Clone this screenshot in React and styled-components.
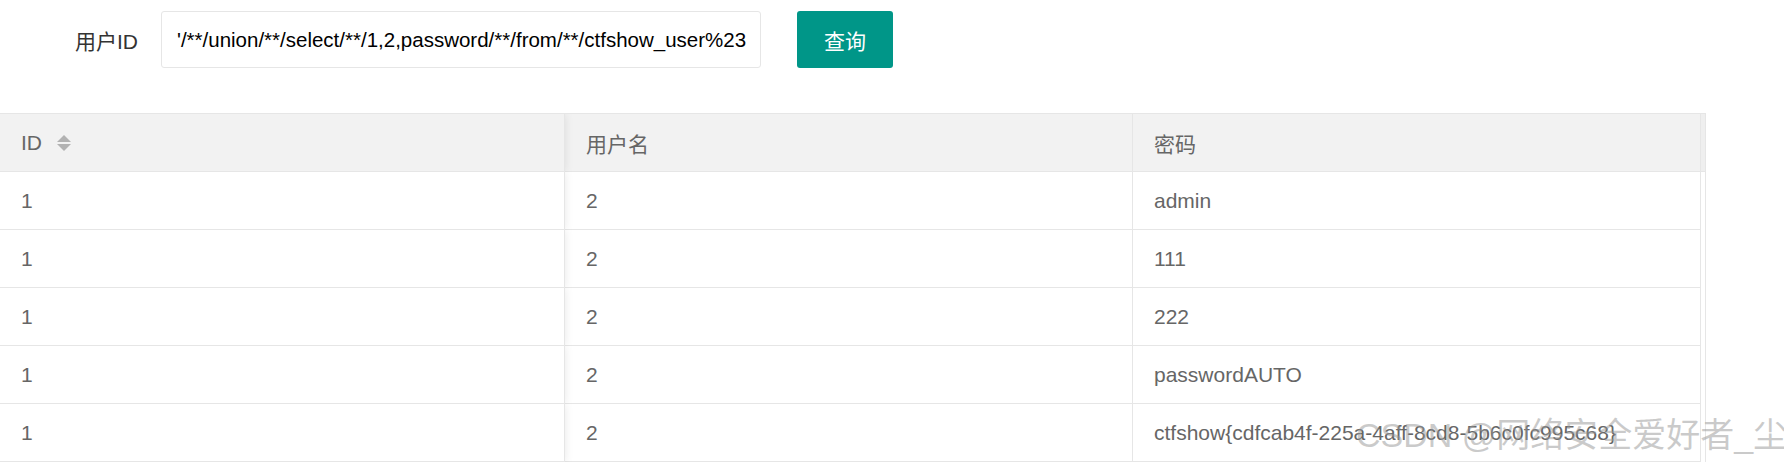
import React from "react";
import styled, { createGlobalStyle } from "styled-components";

const GlobalStyle = createGlobalStyle`
  html, body {
    margin: 0;
    padding: 0;
    background: #ffffff;
    font-family: "Liberation Sans", Arial, "Noto Sans CJK SC", sans-serif;
  }
`;

const Page = styled.div`
  position: relative;
  width: 1784px;
  height: 467px;
  overflow: hidden;
`;

const FormRow = styled.form`
  display: flex;
  align-items: center;
  padding-top: 11px;
  height: 57px;
`;

const Label = styled.label`
  width: 138px;
  margin-right: 23px;
  text-align: right;
  font-size: 21px;
  color: #333;
`;

const Input = styled.input`
  box-sizing: border-box;
  width: 600px;
  height: 57px;
  border: 1px solid #e6e6e6;
  border-radius: 3px;
  padding: 0 0 0 15px;
  font-family: "Liberation Sans", Arial, "Noto Sans CJK SC", sans-serif;
  font-size: 20.5px;
  color: #000;
  outline: none;
  background: #fff;
`;

const Button = styled.button`
  margin-left: 36px;
  width: 96px;
  height: 57px;
  border: none;
  border-radius: 3px;
  background: #009688;
  color: #fff;
  font-family: "Liberation Sans", Arial, "Noto Sans CJK SC", sans-serif;
  font-size: 21px;
  cursor: pointer;
`;

const Table = styled.div`
  margin-top: 45px;
  width: 1706px;
  box-sizing: border-box;
  border-top: 1px solid #e6e6e6;
  border-right: 1px solid #e6e6e6;
  display: grid;
  grid-template-columns: 565px 568px 568px 4px;
`;

const Cell = styled.div`
  box-sizing: border-box;
  height: 58px;
  display: flex;
  align-items: center;
  padding: 0 22px 0 21px;
  border-right: 1px solid #e6e6e6;
  border-bottom: 1px solid #e6e6e6;
  font-size: 21px;
  color: #666;
  background: ${(p) => (p.$head ? "#f2f2f2" : "#fff")};
  white-space: nowrap;
  overflow: hidden;
  ${(p) =>
    p.$fixed &&
    `
    position: relative;
    z-index: 1;
    box-shadow: 1px 0 8px rgba(0,0,0,0.08);
    clip-path: inset(0 -12px 0 0);
  `}
`;

const Patch = styled.div`
  height: 58px;
  box-sizing: border-box;
  background: ${(p) => (p.$head ? "#efefef" : "#fff")};
  border-bottom: ${(p) => (p.$head ? "1px solid #e6e6e6" : "none")};
`;

const SortIcon = styled.span`
  display: inline-flex;
  flex-direction: column;
  gap: 2px;
  margin-left: 15px;
`;

const Tri = styled.span`
  width: 0;
  height: 0;
  border-left: 7.5px solid transparent;
  border-right: 7.5px solid transparent;
  ${(p) =>
    p.$up
      ? "border-bottom: 7px solid #b2b2b2;"
      : "border-top: 7px solid #b2b2b2;"}
`;

const Watermark = styled.div`
  position: absolute;
  left: 1356px;
  top: 410px;
  font-size: 34px;
  line-height: 50px;
  white-space: nowrap;
  color: rgba(150, 150, 150, 0.5);
  font-family: "Liberation Sans", Arial, "Noto Sans CJK SC", sans-serif;
  pointer-events: none;
`;

const rows = [
  ["1", "2", "admin"],
  ["1", "2", "111"],
  ["1", "2", "222"],
  ["1", "2", "passwordAUTO"],
  ["1", "2", "ctfshow{cdfcab4f-225a-4aff-8cd8-5b6c0fc995c68}"],
];

export default function App() {
  return (
    <Page>
      <GlobalStyle />
      <FormRow onSubmit={(e) => e.preventDefault()}>
        <Label>用户ID</Label>
        <Input
          defaultValue="'/**/union/**/select/**/1,2,password/**/from/**/ctfshow_user%23"
        />
        <Button type="button">查询</Button>
      </FormRow>
      <Table>
        <Cell $head $fixed>
          ID
          <SortIcon>
            <Tri $up />
            <Tri />
          </SortIcon>
        </Cell>
        <Cell $head>用户名</Cell>
        <Cell $head>密码</Cell>
        <Patch $head />
        {rows.map((r, i) => (
          <React.Fragment key={i}>
            <Cell $fixed>{r[0]}</Cell>
            <Cell>{r[1]}</Cell>
            <Cell>{r[2]}</Cell>
            <Patch />
          </React.Fragment>
        ))}
      </Table>
      <Watermark>CSDN @网络安全爱好者_尘</Watermark>
    </Page>
  );
}
